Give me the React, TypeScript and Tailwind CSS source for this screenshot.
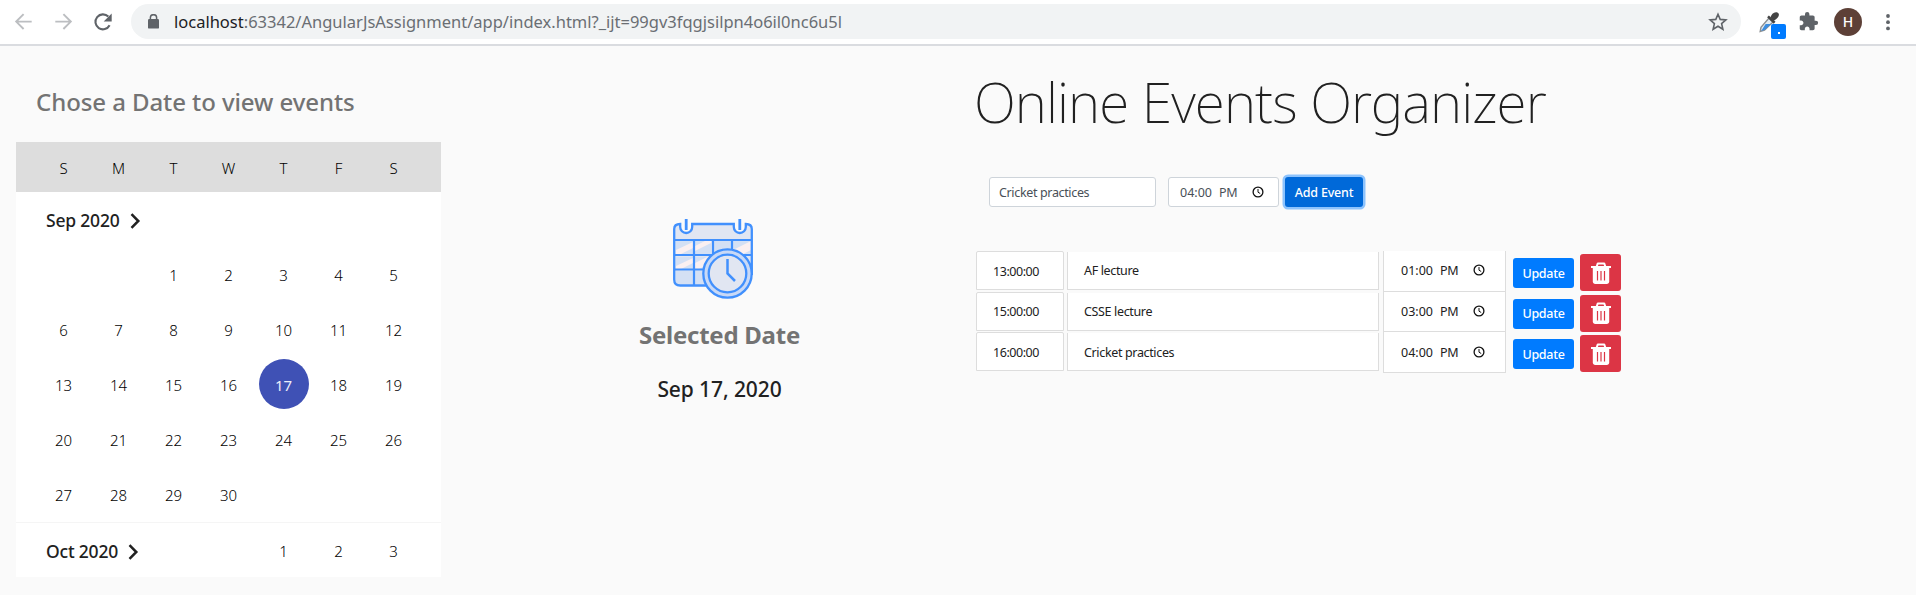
import React from "react";

const SELECTED = 17;

function BrowserBar() {
  return (
    <header className="flex h-[46px] shrink-0 items-start border-b-2 border-[#dadce0] bg-white pt-1">
      <div className="flex h-[35px] flex-1 items-center">
        <svg className="ml-[11px] shrink-0" width="25" height="25" viewBox="0 0 25 25" fill="none" stroke="#bcbec1" strokeWidth="1.9">
          <path d="M20.7 12.6H5.6M12.6 5.2L5.2 12.6l7.4 7.4" />
        </svg>
        <svg className="ml-[15px] shrink-0" width="25" height="25" viewBox="0 0 25 25" fill="none" stroke="#bcbec1" strokeWidth="1.9">
          <path d="M4.3 12.6h15.1M12.4 5.2l7.4 7.4-7.4 7.4" />
        </svg>
        <svg className="ml-[14px] shrink-0" width="26" height="26" viewBox="0 0 26 26">
          <path d="M19.6 16.300A7.500 7.500 0 1 1 18.300 7.600" fill="none" stroke="#5f6368" strokeWidth="2.1" />
          <path d="M21.7 4.4v8h-8z" fill="#5f6368" />
        </svg>
        <div className="ml-[15px] flex h-[35px] w-[1610px] items-center rounded-full bg-[#f1f3f4] pl-[17px]">
          <svg className="shrink-0" width="11" height="15" viewBox="0 0 11 15">
            <rect x="0" y="5" width="11" height="9.6" rx="1.2" fill="#5f6368" />
            <path d="M2.4 6V3.6a3.1 2.9 0 0 1 6.2 0V6" fill="none" stroke="#5f6368" strokeWidth="1.5" />
          </svg>
          <span className="ml-[15px] flex-1 whitespace-nowrap text-[16.5px] leading-[35px] text-[#6a6e73]">
            <span className="text-[#202124]">localhost</span>
            :63342/AngularJsAssignment/app/index.html?_ijt=99gv3fqgjsilpn4o6il0nc6u5l
          </span>
          <svg className="mr-[13px] shrink-0" width="20" height="20" viewBox="0 0 20 20" fill="none" stroke="#5f6368" strokeWidth="1.6">
            <path d="M10 2.200l2.200 5.200 5.700.5-4.300 3.700 1.300 5.600-4.900-3-4.900 3 1.300-5.600-4.300-3.700 5.700-.5z" />
          </svg>
        </div>
        <div className="relative ml-[17px] h-[30px] w-[30px] shrink-0">
          <svg className="mt-[4px]" width="22" height="22" viewBox="0 0 22 22">
            <path d="M11 7l4 4-8.5 8.2-4.3 1.3L3 16.3z" fill="#e3ecf3" stroke="#8b8f92" strokeWidth="1.4" />
            <path d="M7.600 13h5.400L7 18.800l-3.800 1.100z" fill="#3b8de0" />
            <path d="M10 5.4l6.6 6.4" stroke="#444" strokeWidth="2.6" />
            <path d="M12.4 6.400c1-3.400 3.800-6 7-4.900 3 1.400 1.400 5.600-3.600 8.300z" fill="#444" />
          </svg>
          <span className="absolute left-[13px] top-[17px] flex h-[15px] w-[15px] items-center justify-center rounded-[2px] bg-[#007bff]">
            <span className="mt-[3px] h-[2px] w-[2px] bg-white" />
          </span>
        </div>
        <svg className="ml-[10px] shrink-0" width="21" height="21" viewBox="0 0 24 24" fill="#5f6368">
          <path d="M20.500 11H19V7c0-1.100-.9-2-2-2h-4V3.500a2.500 2.500 0 0 0-5 0V5H4c-1.100 0-2 .9-2 2v3.800h1.500c1.500 0 2.700 1.200 2.700 2.700S5 16.200 3.500 16.200H2V20c0 1.100.9 2 2 2h3.800v-1.500c0-1.500 1.200-2.700 2.700-2.700s2.700 1.200 2.700 2.700V22H17c1.100 0 2-.9 2-2v-4h1.500a2.500 2.500 0 0 0 0-5z" />
        </svg>
        <span className="ml-[15px] flex h-[28px] w-[28px] shrink-0 items-center justify-center rounded-full bg-[#5d4037] text-[14px] font-medium text-white">
          H
        </span>
        <svg className="ml-[22px] shrink-0" width="8" height="18" viewBox="0 0 8 18" fill="#5f6368">
          <circle cx="4" cy="3" r="1.900" />
          <circle cx="4" cy="9.200" r="1.900" />
          <circle cx="4" cy="15.400" r="1.900" />
        </svg>
      </div>
    </header>
  );
}

function MonthLabel({ text }: { text: string }) {
  return (
    <div className="col-span-2 flex h-[55px] items-center pl-[10px] text-[17.5px] font-medium tracking-[-0.2px] text-[#212121]">
      <span className="whitespace-nowrap">{text}</span>
      <svg className="ml-[10px] shrink-0" width="11" height="16" viewBox="0 0 11 16" fill="none" stroke="#212121" strokeWidth="2.500">
        <path d="M1.500 1.200L8.300 8l-6.800 6.800" />
      </svg>
    </div>
  );
}

function Day({ n }: { n: number | null }) {
  const on = n === SELECTED;
  return (
    <div className="flex h-[55px] justify-center pt-px">
      <span
        className={
          on
            ? "flex h-[50px] w-[50px] items-center justify-center rounded-full bg-[#3f51b5] pt-[3px] font-normal text-[#eceefa]"
            : "flex h-[50px] w-[50px] items-center justify-center pt-[3px]"
        }
      >
        {n}
      </span>
    </div>
  );
}

function Calendar() {
  const cells: (number | null)[] = [null, null];
  for (let i = 1; i <= 30; i++) cells.push(i);
  return (
    <section className="w-[425px] text-[15px] font-light text-black">
      <div className="grid h-[50px] grid-cols-7 items-center bg-[#dddddd] px-[20px] pt-[3px] text-center">
        {["S", "M", "T", "W", "T", "F", "S"].map((d, i) => (
          <span key={i}>{d}</span>
        ))}
      </div>
      <div className="h-[331px] border-b border-[#f5f5f5] bg-white px-[20px] pt-px">
        <div className="grid grid-cols-7">
          <MonthLabel text="Sep 2020" />
        </div>
        <div className="grid grid-cols-7">
          {cells.map((n, i) => (
            <Day key={i} n={n} />
          ))}
        </div>
      </div>
      <div className="grid h-[54px] grid-cols-7 bg-white px-[20px] pt-px">
        <MonthLabel text="Oct 2020" />
        <span />
        <span />
        <Day n={1} />
        <Day n={2} />
        <Day n={3} />
      </div>
    </section>
  );
}

function CalendarClock() {
  return (
    <svg width="80" height="80" viewBox="0 0 80 80" fill="none" stroke="#4190fd" strokeWidth="2.300">
      <path d="M1 21V10c0-3 2-5 6-5v3a6 6 0 0 0 12 0V5h42v3a6 6 0 0 0 12 0V5c4 0 6 2 6 5v48a20 20 0 0 1-24 8H7c-4 0-6-2-6-6z" fill="#e1e6f2" stroke="none" />
      <path d="M3 22h17v14H3zM22 22h16v14H22zM40 22h18v14H40zM3 38h17v12H3zM22 38h16v12H22zM3 52h17v13H3zM22 52h16v13H22zM60 22h18v14H60z" fill="#d4e0f4" stroke="none" />
      <path d="M3 36V31l17-8v6L6 36zM3 50v-3l17-8v5L8 50zM22 27l10-5h6v2L22 32zM22 44l12-6h4v6l-12 6h-4zM60 31l18-9v9l-10 5h-8z" fill="#fbf0f1" stroke="none" />
      <path d="M34 66.500H7.200c-4 0-6-2-6-6V10c0-3 2-5 6-5v3a6 6 0 0 0 12 0V5h41.600v3a6 6 0 0 0 12 0V5c4 0 6 2 6 5v46" />
      <path d="M13.200 0v11M66.800 0v11" strokeWidth="2.800" />
      <path d="M1 21h78M1 36h78M1 50.500h30M21 21v45M40 21v14M59 21v12" strokeWidth="2.200" />
      <circle cx="54.500" cy="54.500" r="24.200" fill="#c9d9f6" />
      <circle cx="54.500" cy="54.500" r="18.800" fill="#e1e6f2" />
      <path d="M54.500 40v14.500l7.500 7.500" strokeWidth="2.500" />
    </svg>
  );
}

function ClockIcon() {
  return (
    <svg className="mb-[3px] shrink-0" width="12" height="12" viewBox="0 0 12 12" fill="none" stroke="#111" strokeWidth="1.300">
      <circle cx="6" cy="6" r="4.900" />
      <path d="M6 3v3.200l2.200 1.300" strokeWidth="1" />
    </svg>
  );
}

function TimeValue({ time }: { time: string }) {
  return (
    <>
      <span className="w-[39px]">{time}</span>
      <span className="w-[33px] tracking-[-0.300px]">PM</span>
      <ClockIcon />
    </>
  );
}

function TrashIcon() {
  return (
    <svg width="20" height="22" viewBox="0 0 20 22" fill="none" stroke="#fff">
      <path d="M0 5h20" strokeWidth="2" />
      <path d="M5.500 5l1.300-3.600h6.400L14.500 5" strokeWidth="2" strokeLinejoin="round" />
      <path d="M1.800 6h16.400v13.500c0 1.500-1 2.500-2.500 2.500H4.300C2.800 22 1.800 21 1.800 19.500z" fill="#fff" stroke="none" />
      <path d="M6.500 9v9.500M10 9v9.500M13.500 9v9.500" stroke="#dc3545" strokeWidth="1.200" />
    </svg>
  );
}

const EVENTS = [
  { at: "13:00:00", name: "AF lecture", time: "01:00" },
  { at: "15:00:00", name: "CSSE lecture", time: "03:00" },
  { at: "16:00:00", name: "Cricket practices", time: "04:00" },
];

function Organizer() {
  return (
    <section className="text-[12.5px]">
      <h1 className="ml-[-2px] mt-[17px] h-[80px] whitespace-nowrap text-[55px] font-extralight leading-[78px] tracking-[-0.880px] text-[#212121]">
        Online Events Organizer
      </h1>
      <form className="ml-[13px] mt-[34px] flex h-[30px] text-[#495057]">
        <div className="flex w-[167px] items-center rounded-[3px] border border-[#ced4da] bg-white pl-[9px] pt-[2px] tracking-[-0.350px]">
          Cricket practices
        </div>
        <div className="ml-[12px] flex w-[111px] items-center rounded-[3px] border border-[#ced4da] bg-white pl-[11px] pt-[2px]">
          <TimeValue time="04:00" />
        </div>
        <button
          type="button"
          className="ml-[6px] w-[78px] rounded-[3px] bg-[#0069d9] pt-[2px] font-medium tracking-[-0.2px] text-white shadow-[0_0_0_2.500px_#8dc3fd]"
        >
          Add Event
        </button>
      </form>
      <div className="mt-[44px] flex flex-col text-[#212121]">
        {EVENTS.map((e) => (
          <div key={e.at} className="flex h-[40.700px] items-start">
            <div className="flex h-[39px] w-[88px] items-center rounded-t-[2px] border border-[#dddddd] bg-white pl-[16px] pt-[3px] tracking-[-0.450px]">
              {e.at}
            </div>
            <div className="ml-[3px] mt-px flex h-[38px] w-[312px] items-center border border-t-0 border-[#dddddd] bg-white pl-[16px] pt-[2px] tracking-[-0.350px]">
              {e.name}
            </div>
            <div className="ml-[4px] flex h-[40.700px] w-[123px] items-center border border-t-0 border-[#dddddd] bg-white pl-[17px] pt-[2px]">
              <TimeValue time={e.time} />
            </div>
            <button
              type="button"
              className="ml-[7px] mt-[7px] h-[30px] w-[61px] rounded-[3px] bg-[#007bff] pt-[2px] font-medium tracking-[-0.300px] text-white"
            >
              Update
            </button>
            <button
              type="button"
              className="ml-[6px] mt-[3px] flex h-[37px] w-[41px] items-center justify-center rounded-[3px] bg-[#dc3545]"
            >
              <TrashIcon />
            </button>
          </div>
        ))}
      </div>
    </section>
  );
}

export default function App() {
  return (
    <div className="flex h-[595px] w-[1916px] flex-col overflow-hidden bg-[#fafafa] font-['Noto_Sans',sans-serif]">
      <BrowserBar />
      <main className="flex flex-1 items-start">
        <div className="w-[457px] pl-[16px]">
          <h2 className="h-[96px] whitespace-nowrap pl-[20px] pt-[40px] text-[24px] font-medium leading-[32px] tracking-[-0.080px] text-[#737373]">
            Chose a Date to view events
          </h2>
          <Calendar />
        </div>
        <div className="flex w-[519px] flex-col items-center pl-[6px] pt-[173px]">
          <div className="mr-[13px]">
            <CalendarClock />
          </div>
          <h3 className="mt-[20px] text-[24px] font-bold leading-[32px] tracking-[-0.250px] text-[#737373]">Selected Date</h3>
          <p className="mt-[22px] text-[21px] font-medium leading-[32px] tracking-[-0.100px] text-[#212121]">Sep 17, 2020</p>
        </div>
        <Organizer />
      </main>
    </div>
  );
}
